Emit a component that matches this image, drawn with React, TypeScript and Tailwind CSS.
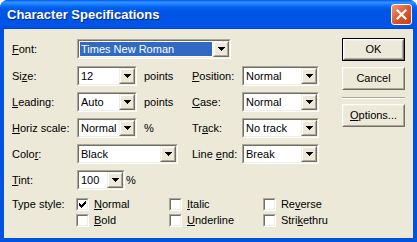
import React from "react";

const FONT = { fontFamily: '"Liberation Sans", Arial, sans-serif' };

function DropBtn() {
  return (
    <div className="w-[16px] h-full shrink-0 border border-t-[#F1EFE2] border-l-[#F1EFE2] border-r-[#716F64] border-b-[#716F64] bg-[#ECE9D8]">
      <div className="h-full w-full border border-t-white border-l-white border-r-[#ACA899] border-b-[#ACA899] flex items-center justify-center">
        <svg width="7" height="4" shapeRendering="crispEdges">
          <rect x="0" y="0" width="7" height="1" fill="#000" />
          <rect x="1" y="1" width="5" height="1" fill="#000" />
          <rect x="2" y="2" width="3" height="1" fill="#000" />
          <rect x="3" y="3" width="1" height="1" fill="#000" />
        </svg>
      </div>
    </div>
  );
}

function Combo({ w, value, selected }: { w: string; value: string; selected?: boolean }) {
  return (
    <div className={`${w} h-[20px] shrink-0 border border-t-[#ACA899] border-l-[#ACA899] border-r-white border-b-white`}>
      <div className="h-full w-full border border-t-[#716F64] border-l-[#716F64] border-r-[#F1EFE2] border-b-[#F1EFE2] bg-white flex">
        {selected ? (
          <div className="flex-1 m-[1px] bg-[#316AC5] text-white flex items-center pl-[1px] leading-none">
            {value}
          </div>
        ) : (
          <div className="flex-1 flex items-center pl-[2px] leading-none">{value}</div>
        )}
        <DropBtn />
      </div>
    </div>
  );
}

function Check({ checked }: { checked?: boolean }) {
  return (
    <div className="w-[13px] h-[13px] shrink-0 border border-t-[#ACA899] border-l-[#ACA899] border-r-white border-b-white">
      <div className="h-full w-full border border-t-[#716F64] border-l-[#716F64] border-r-[#F1EFE2] border-b-[#F1EFE2] bg-white flex items-center justify-center">
        {checked && (
          <svg width="7" height="7" shapeRendering="crispEdges">
            <rect x="6" y="0" width="1" height="3" fill="#000" />
            <rect x="5" y="1" width="1" height="3" fill="#000" />
            <rect x="4" y="2" width="1" height="3" fill="#000" />
            <rect x="3" y="3" width="1" height="3" fill="#000" />
            <rect x="2" y="4" width="1" height="3" fill="#000" />
            <rect x="1" y="3" width="1" height="3" fill="#000" />
            <rect x="0" y="2" width="1" height="3" fill="#000" />
          </svg>
        )}
      </div>
    </div>
  );
}

function CheckItem({ checked, children, w }: { checked?: boolean; children: React.ReactNode; w: string }) {
  return (
    <div className={`${w} flex items-center`}>
      <Check checked={checked} />
      <span className="ml-[5px] leading-none">{children}</span>
    </div>
  );
}

function Button({ children, def }: { children: React.ReactNode; def?: boolean }) {
  const inner = (
    <div className="h-full w-full border border-t-white border-l-white border-r-[#716F64] border-b-[#716F64]">
      <div className="h-full w-full border border-t-[#F1EFE2] border-l-[#F1EFE2] border-r-[#ACA899] border-b-[#ACA899] flex items-center justify-center leading-none">
        {children}
      </div>
    </div>
  );
  return (
    <div className={`w-[63px] h-[23px] bg-[#ECE9D8] ${def ? "border border-black" : ""}`}>{inner}</div>
  );
}

function Label({ w, children }: { w: string; children: React.ReactNode }) {
  return <div className={`${w} shrink-0 leading-none`}>{children}</div>;
}

export default function App() {
  return (
    <div
      className="w-[417px] h-[242px] bg-[#0053E0] rounded-t-[8px] flex flex-col overflow-hidden text-[11px] text-black"
      style={FONT}
    >
      <div className="h-[29px] shrink-0 flex items-center justify-between pl-[7px] pr-[5px] bg-[linear-gradient(to_bottom,#0058EE_0%,#3593FF_8%,#1A82FF_14%,#0466F2_24%,#0057E5_34%,#0054E3_75%,#0055EB_90%,#0046D8_100%)]">
        <span className="text-white font-bold text-[13px] leading-none [text-shadow:1px_1px_#0A2A8A] pb-[1px]">
          Character Specifications
        </span>
        <div className="w-[21px] h-[21px] rounded-[3px] border border-white bg-[linear-gradient(to_bottom_right,#F09A78,#D9542A_55%,#C2401A)] flex items-center justify-center">
          <svg width="13" height="13" viewBox="0 0 13 13">
            <path d="M2.5 2.5L10.5 10.5M10.5 2.5L2.5 10.5" stroke="white" strokeWidth="2.2" strokeLinecap="square" />
          </svg>
        </div>
      </div>
      <div className="flex-1 mx-[4px] mb-[4px] bg-[#ECE9D8] flex">
        <div className="w-[338px] shrink-0 pl-[8px] pt-[10px] flex flex-col">
          <div className="h-[20px] flex items-center">
            <Label w="w-[65px]">
              <u>F</u>ont:
            </Label>
            <Combo w="w-[154px]" value="Times New Roman" selected />
          </div>
          <div className="h-[20px] mt-[7px] flex items-center">
            <Label w="w-[65px]">
              Si<u>z</u>e:
            </Label>
            <div className="w-[115px] flex items-center">
              <Combo w="w-[60px]" value="12" />
              <span className="ml-[7px] leading-none">points</span>
            </div>
            <Label w="w-[50px]">
              <u>P</u>osition:
            </Label>
            <Combo w="w-[77px]" value="Normal" />
          </div>
          <div className="h-[20px] mt-[6px] flex items-center">
            <Label w="w-[65px]">
              <u>L</u>eading:
            </Label>
            <div className="w-[115px] flex items-center">
              <Combo w="w-[60px]" value="Auto" />
              <span className="ml-[7px] leading-none">points</span>
            </div>
            <Label w="w-[50px]">
              <u>C</u>ase:
            </Label>
            <Combo w="w-[77px]" value="Normal" />
          </div>
          <div className="h-[20px] mt-[6px] flex items-center">
            <Label w="w-[65px]">
              <u>H</u>oriz scale:
            </Label>
            <div className="w-[115px] flex items-center">
              <Combo w="w-[60px]" value="Normal" />
              <span className="ml-[7px] leading-none">%</span>
            </div>
            <Label w="w-[50px]">
              Tr<u>a</u>ck:
            </Label>
            <Combo w="w-[77px]" value="No track" />
          </div>
          <div className="h-[20px] mt-[6px] flex items-center">
            <Label w="w-[65px]">
              Colo<u>r</u>:
            </Label>
            <div className="w-[115px] flex items-center">
              <Combo w="w-[101px]" value="Black" />
            </div>
            <Label w="w-[50px]">
              Line <u>e</u>nd:
            </Label>
            <Combo w="w-[77px]" value="Break" />
          </div>
          <div className="h-[20px] mt-[6px] flex items-center">
            <Label w="w-[65px]">
              <u>T</u>int:
            </Label>
            <Combo w="w-[48px]" value="100" />
            <span className="ml-[1px] leading-none">%</span>
          </div>
          <div className="h-[16px] mt-[6px] flex items-center">
            <Label w="w-[64px]">Type style:</Label>
            <CheckItem w="w-[94px]" checked>
              <u>N</u>ormal
            </CheckItem>
            <CheckItem w="w-[95px]">
              <u>I</u>talic
            </CheckItem>
            <CheckItem w="w-[80px]">
              Re<u>v</u>erse
            </CheckItem>
          </div>
          <div className="h-[16px] flex items-center">
            <Label w="w-[64px]"> </Label>
            <CheckItem w="w-[94px]">
              <u>B</u>old
            </CheckItem>
            <CheckItem w="w-[95px]">
              <u>U</u>nderline
            </CheckItem>
            <CheckItem w="w-[80px]">
              Stri<u>k</u>ethru
            </CheckItem>
          </div>
        </div>
        <div className="pt-[9px] flex flex-col">
          <Button def>OK</Button>
          <div className="mt-[6px]">
            <Button>Cancel</Button>
          </div>
          <div className="mt-[7px] w-[63px] h-[2px] border-t border-t-[#ACA899] border-b border-b-white" />
          <div className="mt-[5px]">
            <Button>
              <span>
                <u>O</u>ptions...
              </span>
            </Button>
          </div>
        </div>
      </div>
    </div>
  );
}
